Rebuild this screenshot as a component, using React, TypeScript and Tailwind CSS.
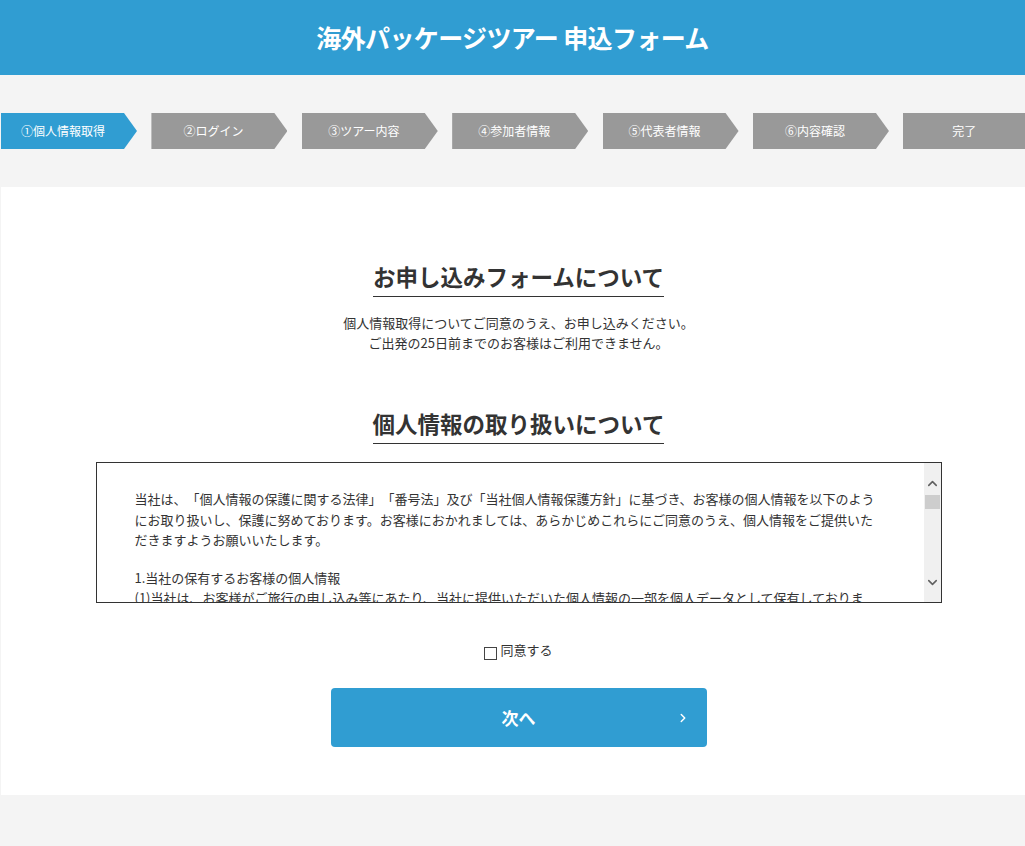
import { ChevronRight, ChevronUp, ChevronDown } from 'lucide-react'

const STEPS = ['①個人情報取得', '②ログイン', '③ツアー内容', '④参加者情報', '⑤代表者情報', '⑥内容確認']

const FONT = { fontFamily: '"Noto Sans CJK JP", "Noto Sans", sans-serif' }

const StepBar = () => (
  <div className="bg-[#f4f4f4] py-[38px]">
    <ol className="flex pl-px">
      {STEPS.map((label, index) => (
        <li key={label} className="w-[150.4px] shrink-0">
          <div
            className={`h-9 w-[136px] flex items-center text-[12px] text-white [clip-path:polygon(0_0,123px_0,136px_50%,123px_100%,0_100%)] ${
              index === 0 ? 'bg-[#309dd2]' : 'bg-[#999999]'
            }`}
          >
            <span className="w-[124px] text-center">{label}</span>
          </div>
        </li>
      ))}
      <li className="flex-1 h-9 bg-[#999999] flex items-center justify-center text-[12px] text-white">
        完了
      </li>
    </ol>
  </div>
)

const SectionTitle = ({ children }: { children: string }) => (
  <div className="text-center">
    <h2 className="inline-block text-[22.5px] leading-[33px] font-bold text-[#333] border-b border-[#333] pb-[3px]">
      {children}
    </h2>
  </div>
)

export default function App() {
  return (
    <div className="min-h-screen bg-[#f4f4f4] text-[#333] [text-spacing-trim:space-all]" style={FONT}>
      {/* Header */}
      <header className="h-[75px] bg-[#309dd2] flex items-center justify-center">
        <h1 className="text-white text-[25px] font-bold tracking-tight">海外パッケージツアー 申込フォーム</h1>
      </header>

      <StepBar />

      {/* Main panel */}
      <main className="ml-px bg-white pl-[11px] pt-[73px] pb-[48px]">
        <SectionTitle>お申し込みフォームについて</SectionTitle>
        <p className="mt-4 text-center text-[13px] leading-[20px]">
          個人情報取得についてご同意のうえ、お申し込みください。
          <br />
          ご出発の25日前までのお客様はご利用できません。
        </p>

        <div className="mt-[54px]">
          <SectionTitle>個人情報の取り扱いについて</SectionTitle>
        </div>

        {/* Scroll box */}
        <div className="mt-[18px] mx-auto w-[846px] h-[141px] border border-[#333] flex">
          <div className="flex-1 overflow-hidden pt-[26px] pl-[38px] text-[13px] leading-[20.5px]">
            <div className="w-[748px]">
              <p>
                当社は、「個人情報の保護に関する法律」「番号法」及び「当社個人情報保護方針」に基づき、お客様の個人情報を以下のようにお取り扱いし、保護に努めております。お客様におかれましては、あらかじめこれらにご同意のうえ、個人情報をご提供いただきますようお願いいたします。
              </p>
              <p className="mt-[17px]">1.当社の保有するお客様の個人情報</p>
              <p>
                (1)当社は、お客様がご旅行の申し込み等にあたり、当社に提供いただいた個人情報の一部を個人データとして保有しております。
              </p>
            </div>
          </div>
          <div className="w-[17px] bg-[#f0f0f0] flex flex-col items-center pt-[13px] pb-[12px]">
            <ChevronUp className="w-[15px] h-[15px] text-[#606060]" strokeWidth={2.5} />
            <div className="mt-[4px] w-[15px] h-[14px] bg-[#cdcdcd]" />
            <div className="flex-1" />
            <ChevronDown className="w-[15px] h-[15px] text-[#606060]" strokeWidth={2.5} />
          </div>
        </div>

        {/* Agree checkbox */}
        <label className="mt-[37px] flex items-center justify-center text-[13px] leading-[20px]">
          <input
            type="checkbox"
            className="appearance-none w-[13px] h-[13px] border border-[#444] bg-white mt-[6px] mr-[3px]"
          />
          同意する
        </label>

        {/* Next button */}
        <div className="mt-[28px] flex justify-center">
          <button className="relative w-[376px] h-[59px] rounded-[4px] bg-[#309dd2] text-white text-[17px] font-bold flex items-center justify-center">
            次へ
            <ChevronRight className="absolute right-[17px] w-[14px] h-[14px]" strokeWidth={2.5} />
          </button>
        </div>
      </main>
    </div>
  )
}
